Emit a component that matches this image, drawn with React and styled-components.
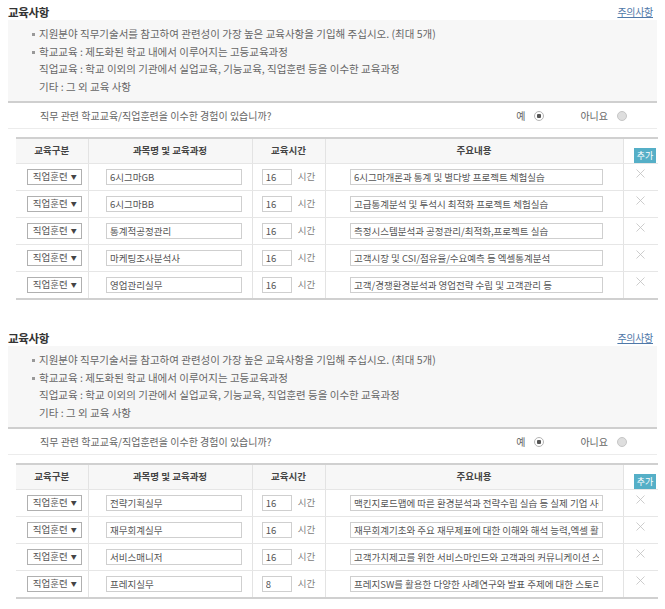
import React from "react";
import styled, { createGlobalStyle } from "styled-components";

const GlobalStyle = createGlobalStyle`
  body {
    margin: 0;
    background: #fff;
    font-family: "Noto Sans CJK KR", "Noto Sans", sans-serif;
    font-size: 10px;
    color: #666;
  }
`;

const Page = styled.div`
  width: 665px;
  box-sizing: border-box;
  padding: 4px 8px 0 8px;
`;

const Section = styled.section`
  & + & {
    margin-top: 30px;
  }
`;

const SectionHead = styled.div`
  display: flex;
  justify-content: space-between;
  align-items: center;
  height: 16px;
  line-height: 16px;
`;

const Title = styled.h3`
  margin: 0;
  font-size: 11.5px;
  font-weight: 700;
  color: #333;
  letter-spacing: -0.3px;
`;

const NoticeLink = styled.a`
  font-size: 10px;
  color: #4f78a8;
  text-decoration: underline;
  margin-right: 4px;
  letter-spacing: -0.3px;
`;

const GuideBox = styled.div`
  background: #f7f7f7;
  border-bottom: 2px solid #cfcfcf;
  padding: 5px 0 6px 31px;
`;

const GuideLine = styled.div`
  position: relative;
  font-size: 10.5px;
  line-height: 17.5px;
  color: #666;
  white-space: nowrap;

  ${(p) =>
    p.$bullet &&
    `
    &::before {
      content: "";
      position: absolute;
      left: -7px;
      top: 8px;
      width: 3px;
      height: 3px;
      background: #999;
    }
  `}
`;

const QuestionRow = styled.div`
  display: flex;
  align-items: center;
  height: 25px;
  border-bottom: 1px solid #ececec;
  padding: 0 30px 0 32px;
  font-size: 10px;
  color: #666;
`;

const QuestionText = styled.span`
  flex: 1;
`;

const RadioLabel = styled.label`
  display: flex;
  align-items: center;
  gap: 9px;
  margin-left: ${(p) => p.$gap || 0}px;
`;

const RadioDot = styled.span`
  display: inline-block;
  box-sizing: border-box;
  width: 10px;
  height: 10px;
  border-radius: 50%;
  border: 1px solid ${(p) => (p.$checked ? "#b5b5b5" : "#c6c6c6")};
  background: ${(p) =>
    p.$checked
      ? "radial-gradient(circle, #555 0 2px, #fff 2.5px)"
      : "#dedede"};
`;

const Table = styled.table`
  margin: 8px 0 0 8px;
  width: 642px;
  border-collapse: collapse;
  table-layout: fixed;
  border-top: 2px solid #d0d0d0;
  border-bottom: 2px solid #d0d0d0;
  font-size: 10px;
  line-height: 1;
`;

const HeadCell = styled.th`
  height: 24px;
  padding: 0;
  background: #f7f7f7;
  font-size: 9.5px;
  font-weight: 700;
  color: #444;
  border-left: 1px solid #e3e3e3;
  border-bottom: 1px solid #e6e6e6;
  &:first-child {
    border-left: none;
  }
`;

const AddCell = styled.th`
  padding: 0 2px 0 0;
  background: #fff;
  vertical-align: bottom;
  text-align: right;
  border-left: 1px solid #e3e3e3;
  border-bottom: 1px solid #e6e6e6;
`;

const AddButton = styled.button`
  display: block;
  margin-left: auto;
  width: 22px;
  height: 15px;
  padding: 0;
  border: none;
  background: #55afc7;
  color: #fff;
  font-family: inherit;
  font-size: 9px;
  line-height: 15px;
`;

const Cell = styled.td`
  height: 26px;
  padding: 0;
  text-align: center;
  border-left: 1px solid #e3e3e3;
  border-bottom: 1px solid #e6e6e6;
  &:first-child {
    border-left: none;
  }
`;

const DelCell = styled.td`
  padding: 5px 0 0 0;
  vertical-align: top;
  text-align: center;
  border-left: 1px solid #e3e3e3;
  border-bottom: 1px solid #e6e6e6;
`;

const SelectBox = styled.div`
  display: inline-flex;
  align-items: center;
  justify-content: space-between;
  box-sizing: border-box;
  width: 55px;
  height: 16px;
  padding: 0 4px 0 5px;
  margin-left: 5px;
  border: 1px solid #b0b0b0;
  background: #fff;
  font-size: 9.5px;
  color: #555;
  vertical-align: middle;
`;

const Arrow = styled.span`
  font-size: 6px;
  color: #444;
`;

const TextInput = styled.input`
  box-sizing: border-box;
  width: ${(p) => p.$w}px;
  height: 16px;
  padding: 0 3px;
  margin: 0 0 0 ${(p) => p.$ml || 0}px;
  border: 1px solid #cfcfcf;
  background: #fff;
  font-family: inherit;
  font-size: 9.5px;
  color: #555;
  vertical-align: middle;
  outline: none;
`;

const HoursWrap = styled.div`
  display: inline-flex;
  align-items: center;
  gap: 6px;
  vertical-align: middle;
`;

const Unit = styled.span`
  font-size: 9.5px;
  color: #808080;
`;

const cols = [72, 164, 73, 298, 35];

const DeleteIcon = () => (
  <svg width="9" height="9" viewBox="0 0 9 9" style={{ display: "block", margin: "0 auto" }}>
    <path d="M0.5 0.5 L8.5 8.5 M8.5 0.5 L0.5 8.5" stroke="#c0c0c0" strokeWidth="0.8" />
  </svg>
);

const EduSection = ({ rows }) => (
  <Section>
    <SectionHead>
      <Title>교육사항</Title>
      <NoticeLink>주의사항</NoticeLink>
    </SectionHead>
    <GuideBox>
      <GuideLine $bullet>
        지원분야 직무기술서를 참고하여 관련성이 가장 높은 교육사항을 기입해 주십시오. (최대 5개)
      </GuideLine>
      <GuideLine $bullet>학교교육 : 제도화된 학교 내에서 이루어지는 고등교육과정</GuideLine>
      <GuideLine>직업교육 : 학교 이외의 기관에서 실업교육, 기능교육, 직업훈련 등을 이수한 교육과정</GuideLine>
      <GuideLine>기타 : 그 외 교육 사항</GuideLine>
    </GuideBox>
    <QuestionRow>
      <QuestionText>직무 관련 학교교육/직업훈련을 이수한 경험이 있습니까?</QuestionText>
      <RadioLabel>
        예 <RadioDot $checked />
      </RadioLabel>
      <RadioLabel $gap={36}>
        아니요 <RadioDot />
      </RadioLabel>
    </QuestionRow>
    <Table>
      <colgroup>
        {cols.map((w, i) => (
          <col key={i} style={{ width: w }} />
        ))}
      </colgroup>
      <thead>
        <tr>
          <HeadCell>교육구분</HeadCell>
          <HeadCell>과목명 및 교육과정</HeadCell>
          <HeadCell>교육시간</HeadCell>
          <HeadCell>주요내용</HeadCell>
          <AddCell>
            <AddButton>추가</AddButton>
          </AddCell>
        </tr>
      </thead>
      <tbody>
        {rows.map((r, i) => (
          <tr key={i}>
            <Cell>
              <SelectBox>
                직업훈련 <Arrow>▼</Arrow>
              </SelectBox>
            </Cell>
            <Cell>
              <TextInput $w={136} $ml={8} value={r.name} readOnly />
            </Cell>
            <Cell>
              <HoursWrap>
                <TextInput $w={30} value={r.hours} readOnly />
                <Unit>시간</Unit>
              </HoursWrap>
            </Cell>
            <Cell>
              <TextInput $w={253} $ml={5} value={r.desc} readOnly />
            </Cell>
            <DelCell>
              <DeleteIcon />
            </DelCell>
          </tr>
        ))}
      </tbody>
    </Table>
  </Section>
);

const firstRows = [
  { name: "6시그마GB", hours: "16", desc: "6시그마개론과 통계 및 별다방 프로젝트 체험실습" },
  { name: "6시그마BB", hours: "16", desc: "고급통계분석 및 투석시 최적화 프로젝트 체험실습" },
  { name: "통계적공정관리", hours: "16", desc: "측정시스템분석과 공정관리/최적화,프로젝트 실습" },
  { name: "마케팅조사분석사", hours: "16", desc: "고객시장 및 CSI/점유율/수요예측 등 엑셀통계분석" },
  { name: "영업관리실무", hours: "16", desc: "고객/경쟁환경분석과 영업전략 수립 및 고객관리 등" },
];

const secondRows = [
  { name: "전략기획실무", hours: "16", desc: "맥킨지로드맵에 따른 환경분석과 전략수립 실습 등 실제 기업 사례 분석" },
  { name: "재무회계실무", hours: "16", desc: "재무회계기초와 주요 재무제표에 대한 이해와 해석 능력,엑셀 활용" },
  { name: "서비스매니저", hours: "16", desc: "고객가치제고를 위한 서비스마인드와 고객과의 커뮤니케이션 스킬" },
  { name: "프레지실무", hours: "8", desc: "프레지SW를 활용한 다양한 사례연구와 발표 주제에 대한 스토리텔링" },
];

export default function App() {
  return (
    <>
      <GlobalStyle />
      <Page>
        <EduSection rows={firstRows} />
        <EduSection rows={secondRows} />
      </Page>
    </>
  );
}
